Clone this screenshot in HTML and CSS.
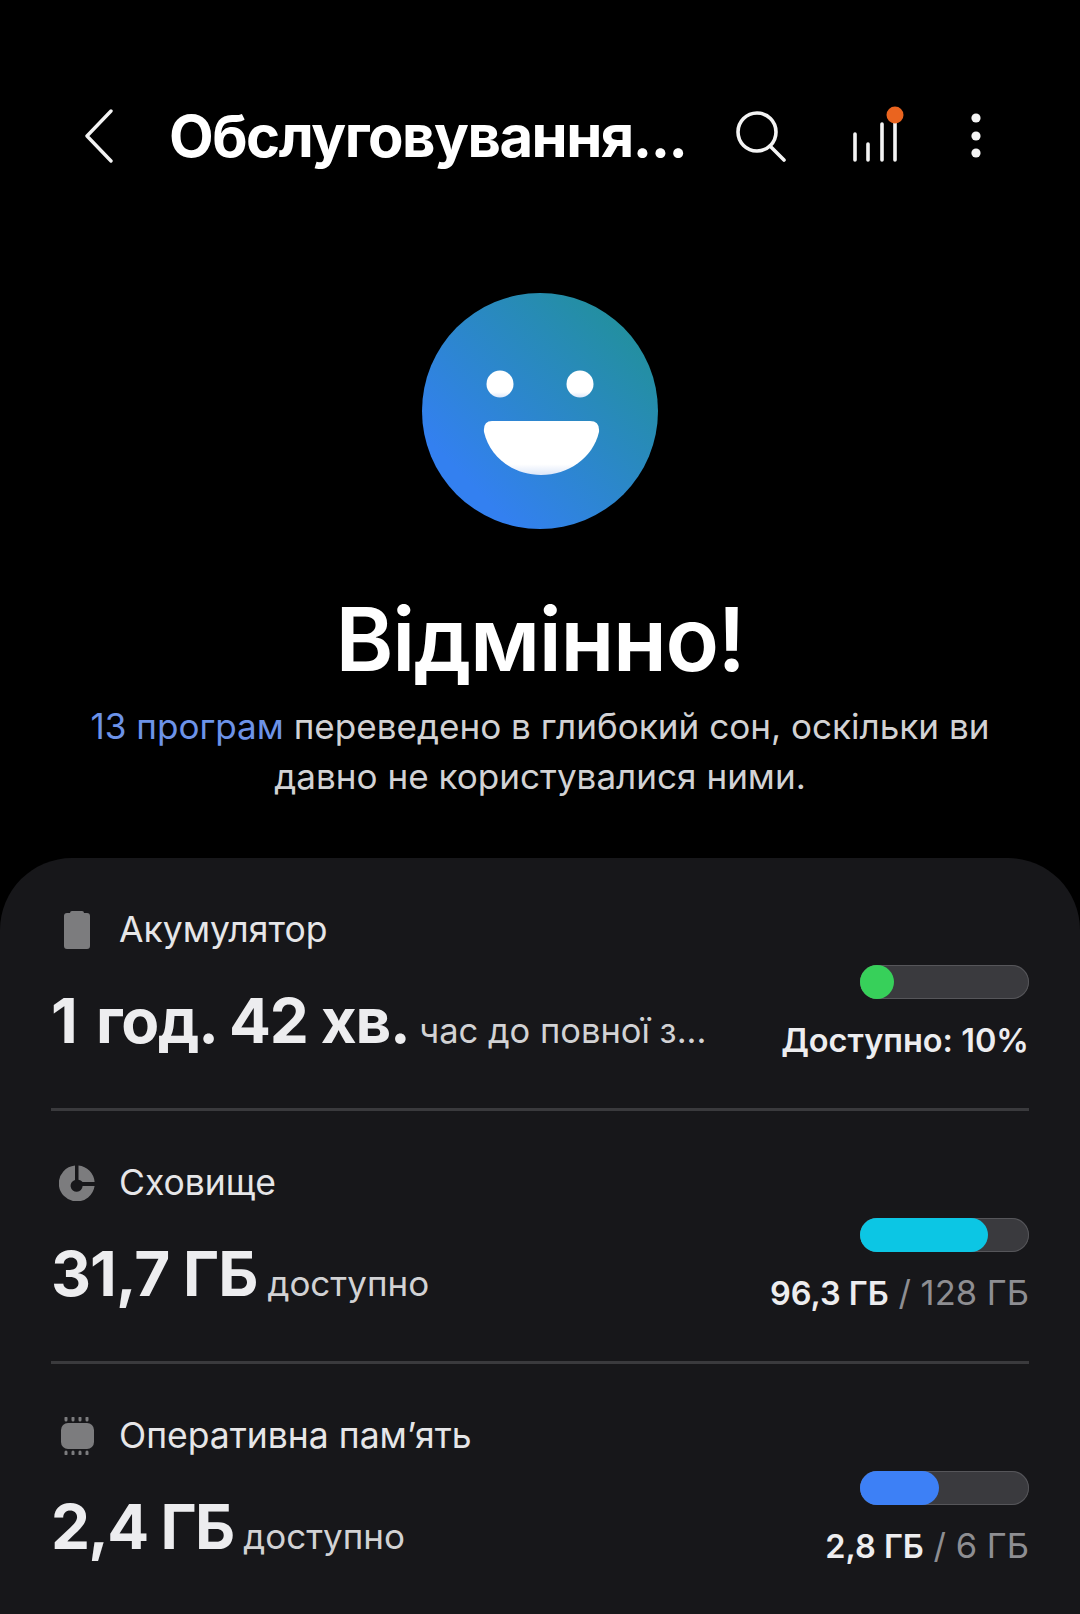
FILE: index.html
```html
<!DOCTYPE html>
<html lang="uk">
  <head>
    <meta charset="utf-8">
    <title>Обслуговування пристрою</title>
    <link rel="stylesheet" href="styles.css">
  </head>
  <body>
    <header class="topbar">
      <svg class="back" width="30" height="54" viewBox="0 0 30 54"><path d="M27 2 L3 27 L27 52" fill="none" stroke="#f4f4f4" stroke-width="3.4" stroke-linecap="round" stroke-linejoin="round"/></svg>
      <h1 class="title">Обслуговування...</h1>
      <svg class="search" width="52" height="52" viewBox="0 0 52 52"><circle cx="22" cy="22" r="19" fill="none" stroke="#f4f4f4" stroke-width="3.6"/><path d="M35 36 L49 50" stroke="#f4f4f4" stroke-width="3.6" stroke-linecap="round"/></svg>
      <svg class="signal" width="56" height="60" viewBox="0 0 56 60">
        <path d="M6 28 V54 M19 38 V54 M33 18 V54 M46 12 V54" stroke="#f4f4f4" stroke-width="3.6" stroke-linecap="round"/>
        <circle cx="46" cy="9" r="8.5" fill="#ea641f"/>
      </svg>
      <svg class="more" width="12" height="48" viewBox="0 0 12 48"><circle cx="6" cy="6" r="4.6" fill="#f4f4f4"/><circle cx="6" cy="24" r="4.6" fill="#f4f4f4"/><circle cx="6" cy="41" r="4.6" fill="#f4f4f4"/></svg>
    </header>

    <section class="hero">
      <svg class="smile" width="236" height="236" viewBox="0 0 236 236">
        <defs>
          <linearGradient id="face" x1="0.12" y1="0.88" x2="0.9" y2="0.12">
            <stop offset="0.1" stop-color="#3380f0"/>
            <stop offset="1" stop-color="#22909c"/>
          </linearGradient>
          <linearGradient id="tooth" x1="0" y1="0" x2="0" y2="1">
            <stop offset="0.8" stop-color="#fff"/>
            <stop offset="1" stop-color="#dce6f8"/>
          </linearGradient>
        </defs>
        <circle cx="118" cy="118" r="118" fill="url(#face)"/>
        <circle cx="78" cy="91" r="13.5" fill="url(#tooth)"/>
        <circle cx="158" cy="91" r="13.5" fill="url(#tooth)"/>
        <path d="M70 128 H168 Q178 128 177 139 C171 165 146 182 119 182 C92 182 68 165 62 139 Q61 128 70 128 Z" fill="url(#tooth)"/>
      </svg>
      <h2 class="status">Відмінно!</h2>
      <p class="note"><span class="link">13 програм</span> переведено в глибокий сон, оскільки ви<br>давно не користувалися ними.</p>
    </section>

    <main class="card">
      <div class="row">
        <div class="info">
          <div class="label">
            <svg class="icon" width="36" height="40" viewBox="0 0 36 40"><path d="M13 1 H23 Q25 1 25 3 H28 Q31 3 31 6 V36 Q31 39 28 39 H8 Q5 39 5 36 V6 Q5 3 8 3 H11 Q11 1 13 1 Z" fill="#7c7c7e"/></svg>
            <span>Акумулятор</span>
          </div>
          <div class="value"><b class="time"><span class="one">1</span> год. 42 хв.</b> <span class="hint">час до повної з...</span></div>
        </div>
        <div class="usage">
          <div class="bar"><div class="fill green" style="width:34px"></div></div>
          <div class="amount"><b>Доступно: 10%</b></div>
        </div>
      </div>

      <div class="row">
        <div class="info">
          <div class="label">
            <svg class="icon" width="36" height="36" viewBox="0 0 36 36">
              <path d="M16 .5 V15 A6 6 0 1 0 23.6 21 H35.6 A18 18 0 1 1 16 .5 Z" fill="#7c7c7e"/>
              <path d="M19.5 .5 A18 18 0 0 1 35.6 17 H23.6 A6 6 0 0 0 19.5 14.7 Z" fill="#7c7c7e"/>
            </svg>
            <span>Сховище</span>
          </div>
          <div class="value"><b>31,7 ГБ</b> <span>доступно</span></div>
        </div>
        <div class="usage">
          <div class="bar"><div class="fill cyan" style="width:128px"></div></div>
          <div class="amount"><b>96,3 ГБ</b> <i>/ 128 ГБ</i></div>
        </div>
      </div>

      <div class="row last">
        <div class="info">
          <div class="label">
            <svg class="icon" width="36" height="38" viewBox="0 0 36 38">
              <rect x="2" y="6" width="33" height="26" rx="7" fill="#7c7c7e"/>
              <path d="M7 1 V3 M14 1 V3 M21 1 V3 M28 1 V3 M7 35 V37 M14 35 V37 M21 35 V37 M28 35 V37" stroke="#7c7c7e" stroke-width="3" stroke-linecap="round"/>
            </svg>
            <span>Оперативна пам’ять</span>
          </div>
          <div class="value"><b class="tight">2,4 ГБ</b> <span>доступно</span></div>
        </div>
        <div class="usage">
          <div class="bar"><div class="fill blue" style="width:79px"></div></div>
          <div class="amount"><b>2,8 ГБ</b> <i>/ 6 ГБ</i></div>
        </div>
      </div>
    </main>
  </body>
</html>
```

FILE: styles.css
```css
html, body {
  margin: 0;
  background: #000;
  height: 1614px;
  overflow: hidden;
  font-family: "Inter", "Noto Sans", sans-serif;
  color: #f2f2f4;
}

.topbar {
  display: flex;
  align-items: center;
  height: 110px;
  padding: 81px 0 0 84px;
}
.title {
  margin: 0 0 0 55px;
  width: 540px;
  font-size: 58px;
  font-weight: 700;
  letter-spacing: -1.5px;
  white-space: nowrap;
  color: #fff;
}
.search {
  margin-left: 26px;
}
.signal {
  margin-left: 62px;
}
.more {
  margin-left: 65px;
}

.hero {
  display: flex;
  flex-direction: column;
  align-items: center;
  padding-top: 102px;
}
.smile {
  display: block;
}
.status {
  margin: 60px 0 0;
  font-size: 88px;
  line-height: 100px;
  font-weight: 600;
  letter-spacing: -1.4px;
  color: #fff;
}
.note {
  margin: 12px 0 0;
  font-size: 35.1px;
  line-height: 50px;
  text-align: center;
  color: #d2d2d4;
}
.link {
  color: #6d93e8;
}

.card {
  margin-top: 57px;
  height: 760px;
  background: #17171a;
  border-radius: 72px 72px 0 0;
  padding: 0 51px;
}
.row {
  display: flex;
  justify-content: space-between;
  height: 253px;
  border-bottom: 3px solid #3a3a3d;
  box-sizing: border-box;
}
.row.last {
  border-bottom: 0;
}
.info {
  padding-top: 47px;
  min-width: 0;
}
.label {
  display: flex;
  align-items: center;
  font-size: 35.5px;
  line-height: 50px;
  color: #e6e6e8;
}
.icon {
  margin: 0 24px 0 8px;
}
.value {
  margin-top: 28px;
  font-size: 35px;
  line-height: 76px;
  color: #d2d2d4;
  white-space: nowrap;
}
.value b {
  font-size: 62px;
  font-weight: 700;
  letter-spacing: -0.9px;
  color: #ededef;
}
.value b.time {
  letter-spacing: -1.3px;
}
.value b.tight {
  letter-spacing: -1.7px;
}
.one {
  letter-spacing: 5px;
}
.hint {
  font-size: 34.5px;
}
.usage {
  padding-top: 107px;
  display: flex;
  flex-direction: column;
  align-items: flex-end;
}
.bar {
  width: 169px;
  height: 34px;
  border-radius: 17px;
  background: #3a3a3e;
  box-shadow: inset 0 0 0 1px #56565a;
}
.fill {
  height: 100%;
  border-radius: 17px;
}
.green { background: #37d05a; }
.cyan { background: #0cc6e4; }
.blue { background: #3d80f6; }
.amount {
  margin-top: 19px;
  font-size: 34.5px;
  line-height: 44px;
  white-space: nowrap;
}
.amount b {
  font-size: 32.5px;
  font-weight: 600;
  color: #ededef;
}
.amount i {
  font-style: normal;
  color: #8e8e92;
}
```
